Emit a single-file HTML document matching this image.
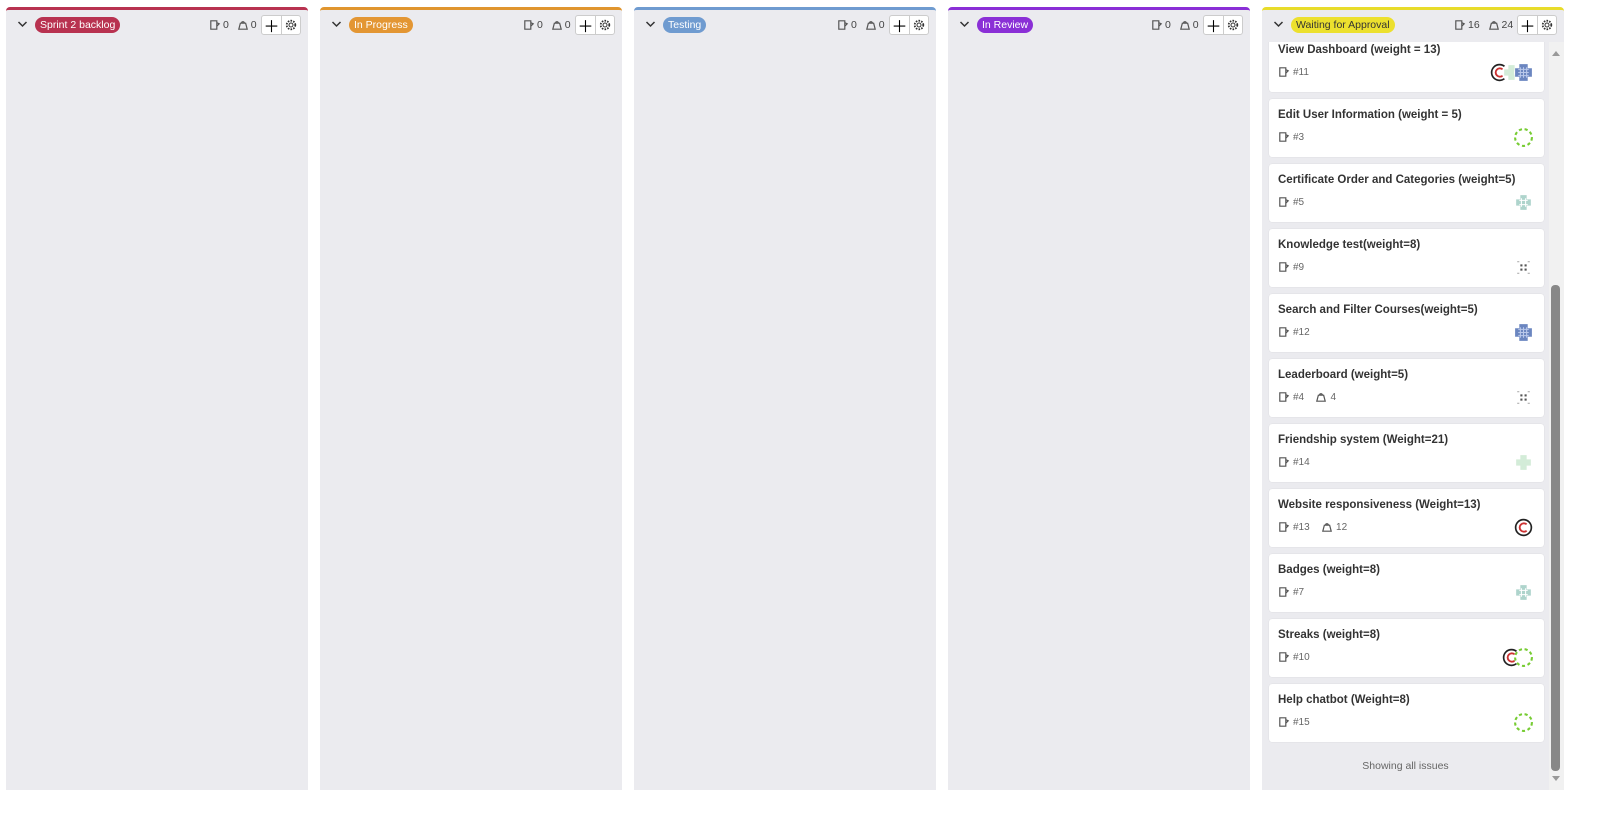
<!DOCTYPE html>
<html><head><meta charset="utf-8"><style>
*{box-sizing:border-box;margin:0;padding:0}
body{width:1600px;height:816px;background:#fff;font-family:"Liberation Sans",sans-serif;position:relative;overflow:hidden}
.col{position:absolute;top:7px;width:302px;height:783px;background:#ebebef;border-top:3px solid;border-radius:4px 4px 0 0;overflow:hidden}
.hdr{position:absolute;top:0;left:0;right:0;height:32px;background:#ebebef;z-index:2}
.chev{position:absolute;left:11px;top:10px}
.badge{position:absolute;left:29px;top:7px;height:16px;border-radius:8px;font-size:10.5px;line-height:16px;padding:0 5px;color:#fff}
.cnt{position:absolute;top:9px;font-size:10.5px;color:#444;display:flex;align-items:center;gap:2px}
.btns{position:absolute;right:7px;top:5px;display:flex;border:1px solid #ccc;border-radius:3px;background:#fff;height:20px}
.btns div{width:19px;height:18px;display:flex;align-items:center;justify-content:center}
.btns div+div{border-left:1px solid #ccc}
.card{position:absolute;left:7px;width:275px;height:58px;background:#fff;border-radius:3px;box-shadow:0 0 1px rgba(0,0,0,.15)}
.t{position:absolute;left:9px;top:10px;font-size:11.5px;font-weight:bold;color:#333}
.m{position:absolute;left:9px;top:32px;font-size:10px;color:#666;display:flex;align-items:center;gap:3px}
.av{position:absolute;right:10px;top:28px;display:flex}
</style></head><body>
<svg width="0" height="0" style="position:absolute"><defs>
<symbol id="iss" viewBox="0 0 10 10"><path d="M1.5 1.5h5v7h-5z M6.5 3l2 1-2 2" fill="none" stroke="#555" stroke-width="1"/></symbol>
<symbol id="wt" viewBox="0 0 10 10"><path d="M1.5 8.5h7l-1.3-5h-4.4z M3.8 3.5a1.2 1.2 0 0 1 2.4 0" fill="none" stroke="#555" stroke-width="1"/></symbol>
<symbol id="gear" viewBox="0 0 12 12"><circle cx="6" cy="6" r="2" fill="none" stroke="#333"/><circle cx="6" cy="6" r="4.3" fill="none" stroke="#333" stroke-dasharray="1.6 1.2" stroke-width="1.8"/></symbol>
<symbol id="cA" viewBox="0 0 20 20"><circle cx="10" cy="10" r="9" fill="#fff"/><circle cx="10" cy="10" r="7.5" fill="none" stroke="#222" stroke-width="1.6"/><path d="M13 7a4 4 0 1 0 0 6" fill="none" stroke="#c33" stroke-width="1.8"/></symbol>
<symbol id="gA" viewBox="0 0 20 20"><circle cx="10" cy="10" r="9" fill="#fff"/><circle cx="10" cy="10" r="8" fill="none" stroke="#7c3" stroke-width="2" stroke-dasharray="3 2.5"/></symbol>
<symbol id="bA" viewBox="0 0 20 20"><circle cx="10" cy="10" r="9" fill="#fff"/><path d="M6 2h8v4h4v8h-4v4H6v-4H2V6h4z" fill="#6b86c0"/><path d="M5 7h10M5 10h10M5 13h10M7 5v10M10 5v10M13 5v10" stroke="#b9c8ea" stroke-width="1"/></symbol>
<symbol id="tA" viewBox="0 0 20 20"><circle cx="10" cy="10" r="9" fill="#fff"/><path d="M7 3h6v4h4v6h-4v4H7v-4H3V7h4z" fill="#aed4cc"/><path d="M6 8h8M6 12h8M8 6v8M12 6v8" stroke="#fff"/></symbol>
<symbol id="dA" viewBox="0 0 20 20"><circle cx="10" cy="10" r="9" fill="#fff"/><g fill="#555"><rect x="7" y="7" width="2" height="2"/><rect x="11" y="7" width="2" height="2"/><rect x="7" y="11" width="2" height="2"/><rect x="11" y="11" width="2" height="2"/></g><g fill="#aaa"><rect x="4" y="4" width="2" height="1"/><rect x="14" y="4" width="2" height="1"/><rect x="4" y="15" width="2" height="1"/><rect x="14" y="15" width="2" height="1"/></g></symbol>
<symbol id="lA" viewBox="0 0 20 20"><circle cx="10" cy="10" r="9" fill="#fff"/><path d="M7 3h6v4h4v6h-4v4H7v-4H3V7h4z" fill="#d3ecd8"/></symbol>
</defs></svg>

<div class="col" style="left:6px;border-color:#b83250"><div class="hdr">
<svg class="chev" width="11" height="8" viewBox="0 0 11 8"><path d="M1.5 2l4 4 4-4" fill="none" stroke="#333" stroke-width="1.5"/></svg>
<div class="badge" style="background:#b83250">Sprint 2 backlog</div>
<div class="cnt" style="left:203px"><svg width="12" height="12"><use href="#iss"/></svg>0&nbsp;&nbsp;<svg width="12" height="12"><use href="#wt"/></svg>0</div>
<div class="btns"><div>＋</div><div><svg width="12" height="12"><use href="#gear"/></svg></div></div></div></div>

<div class="col" style="left:320px;border-color:#e0952e"><div class="hdr">
<svg class="chev" width="11" height="8" viewBox="0 0 11 8"><path d="M1.5 2l4 4 4-4" fill="none" stroke="#333" stroke-width="1.5"/></svg>
<div class="badge" style="background:#e39633">In Progress</div>
<div class="cnt" style="left:203px"><svg width="12" height="12"><use href="#iss"/></svg>0&nbsp;&nbsp;<svg width="12" height="12"><use href="#wt"/></svg>0</div>
<div class="btns"><div>＋</div><div><svg width="12" height="12"><use href="#gear"/></svg></div></div></div></div>

<div class="col" style="left:634px;border-color:#6f9bd0"><div class="hdr">
<svg class="chev" width="11" height="8" viewBox="0 0 11 8"><path d="M1.5 2l4 4 4-4" fill="none" stroke="#333" stroke-width="1.5"/></svg>
<div class="badge" style="background:#6f9bd0">Testing</div>
<div class="cnt" style="left:203px"><svg width="12" height="12"><use href="#iss"/></svg>0&nbsp;&nbsp;<svg width="12" height="12"><use href="#wt"/></svg>0</div>
<div class="btns"><div>＋</div><div><svg width="12" height="12"><use href="#gear"/></svg></div></div></div></div>

<div class="col" style="left:948px;border-color:#8a2fd6"><div class="hdr">
<svg class="chev" width="11" height="8" viewBox="0 0 11 8"><path d="M1.5 2l4 4 4-4" fill="none" stroke="#333" stroke-width="1.5"/></svg>
<div class="badge" style="background:#8a2fd6">In Review</div>
<div class="cnt" style="left:203px"><svg width="12" height="12"><use href="#iss"/></svg>0&nbsp;&nbsp;<svg width="12" height="12"><use href="#wt"/></svg>0</div>
<div class="btns"><div>＋</div><div><svg width="12" height="12"><use href="#gear"/></svg></div></div></div></div>

<div class="col" style="left:1262px;width:302px;border-color:#e8dc2a">
<div class="hdr">
<svg class="chev" width="11" height="8" viewBox="0 0 11 8"><path d="M1.5 2l4 4 4-4" fill="none" stroke="#333" stroke-width="1.5"/></svg>
<div class="badge" style="background:#ece02e;color:#333">Waiting for Approval</div>
<div class="cnt" style="left:192px"><svg width="12" height="12"><use href="#iss"/></svg>16&nbsp;&nbsp;<svg width="12" height="12"><use href="#wt"/></svg>24</div>
<div class="btns"><div>＋</div><div><svg width="12" height="12"><use href="#gear"/></svg></div></div></div>

<div class="card" style="top:24px"><div class="t">View Dashboard (weight = 13)</div><div class="m"><svg width="12" height="12"><use href="#iss"/></svg>#11</div><div class="av"><svg width="21" height="21"><use href="#cA"/></svg><svg width="21" height="21" style="margin-left:-9px"><use href="#lA"/></svg><svg width="21" height="21" style="margin-left:-9px"><use href="#bA"/></svg></div></div>
<div class="card" style="top:89px"><div class="t">Edit User Information (weight = 5)</div><div class="m"><svg width="12" height="12"><use href="#iss"/></svg>#3</div><div class="av"><svg width="21" height="21"><use href="#gA"/></svg></div></div>
<div class="card" style="top:154px"><div class="t">Certificate Order and Categories (weight=5)</div><div class="m"><svg width="12" height="12"><use href="#iss"/></svg>#5</div><div class="av"><svg width="21" height="21"><use href="#tA"/></svg></div></div>
<div class="card" style="top:219px"><div class="t">Knowledge test(weight=8)</div><div class="m"><svg width="12" height="12"><use href="#iss"/></svg>#9</div><div class="av"><svg width="21" height="21"><use href="#dA"/></svg></div></div>
<div class="card" style="top:284px"><div class="t">Search and Filter Courses(weight=5)</div><div class="m"><svg width="12" height="12"><use href="#iss"/></svg>#12</div><div class="av"><svg width="21" height="21"><use href="#bA"/></svg></div></div>
<div class="card" style="top:349px"><div class="t">Leaderboard (weight=5)</div><div class="m"><svg width="12" height="12"><use href="#iss"/></svg>#4&nbsp;&nbsp;&nbsp;<svg width="12" height="12"><use href="#wt"/></svg>4</div><div class="av"><svg width="21" height="21"><use href="#dA"/></svg></div></div>
<div class="card" style="top:414px"><div class="t">Friendship system (Weight=21)</div><div class="m"><svg width="12" height="12"><use href="#iss"/></svg>#14</div><div class="av"><svg width="21" height="21"><use href="#lA"/></svg></div></div>
<div class="card" style="top:479px"><div class="t">Website responsiveness (Weight=13)</div><div class="m"><svg width="12" height="12"><use href="#iss"/></svg>#13&nbsp;&nbsp;&nbsp;<svg width="12" height="12"><use href="#wt"/></svg>12</div><div class="av"><svg width="21" height="21"><use href="#cA"/></svg></div></div>
<div class="card" style="top:544px"><div class="t">Badges (weight=8)</div><div class="m"><svg width="12" height="12"><use href="#iss"/></svg>#7</div><div class="av"><svg width="21" height="21"><use href="#tA"/></svg></div></div>
<div class="card" style="top:609px"><div class="t">Streaks (weight=8)</div><div class="m"><svg width="12" height="12"><use href="#iss"/></svg>#10</div><div class="av"><svg width="21" height="21"><use href="#cA"/></svg><svg width="21" height="21" style="margin-left:-9px"><use href="#gA"/></svg></div></div>
<div class="card" style="top:674px"><div class="t">Help chatbot (Weight=8)</div><div class="m"><svg width="12" height="12"><use href="#iss"/></svg>#15</div><div class="av"><svg width="21" height="21"><use href="#gA"/></svg></div></div>
<div style="position:absolute;top:750px;left:0;width:287px;text-align:center;font-size:10.5px;color:#666">Showing all issues</div>
<div style="position:absolute;left:287px;top:32px;width:15px;height:751px;background:#f1f1f1"></div>
</div>

<div style="position:absolute;left:1552px;top:51px;width:0;height:0;border-left:4px solid transparent;border-right:4px solid transparent;border-bottom:5px solid #999"></div>
<div style="position:absolute;left:1551px;top:285px;width:9px;height:486px;background:#888;border-radius:4px"></div>
<div style="position:absolute;left:1552px;top:776px;width:0;height:0;border-left:4px solid transparent;border-right:4px solid transparent;border-top:5px solid #999"></div>
</body></html>
